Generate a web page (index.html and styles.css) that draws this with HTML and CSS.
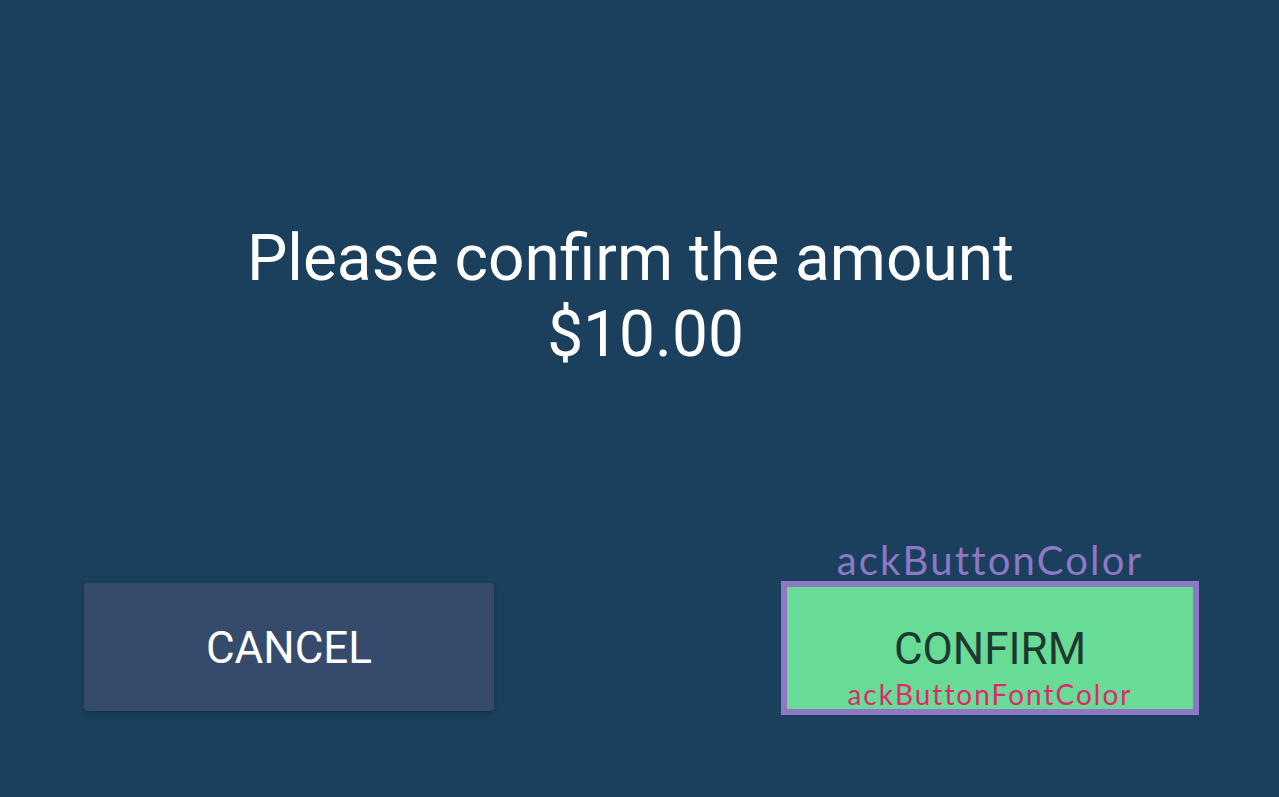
FILE: index.html
```html
<!DOCTYPE html>
<html>
<head>
<meta charset="utf-8">
<link rel="stylesheet" href="styles.css">
</head>
<body>
<main class="screen">
  <section class="prompt">
    <p class="line line-first">Please confirm the amount</p>
    <p class="line line-second">$10.00</p>
  </section>
  <section class="actions">
    <button class="btn btn-cancel"><span class="btn-label">CANCEL</span></button>
    <div class="confirm-wrap">
      <span class="note note-color">ackButtonColor</span>
      <button class="btn btn-confirm">
        <span class="btn-label">CONFIRM</span>
        <span class="note note-font">ackButtonFontColor</span>
      </button>
    </div>
  </section>
</main>
</body>
</html>
```

FILE: styles.css
```css
html, body {
  margin: 0;
  padding: 0;
  height: 100%;
}
body {
  background: #1b405d;
  font-family: Roboto, "Liberation Sans", sans-serif;
  overflow: hidden;
}
.screen {
  height: 797px;
  display: flex;
  flex-direction: column;
}
.prompt {
  padding-top: 221px;
  text-align: center;
  color: #ffffff;
  font-size: 64px;
  line-height: 76px;
}
.line {
  margin: 0;
}
.line-first {
  padding-right: 18px;
}
.line-second {
  padding-left: 12px;
}
.actions {
  margin-top: auto;
  display: flex;
  justify-content: space-between;
  align-items: flex-end;
  padding: 0 80px 82px 84px;
}
.btn {
  border: none;
  font-family: Roboto, "Liberation Sans", sans-serif;
  font-size: 44px;
  padding: 0;
  display: flex;
  align-items: center;
  justify-content: center;
}
.btn-label {
  padding-top: 2px;
}
.btn-cancel {
  width: 410px;
  height: 128px;
  margin-bottom: 4px;
  background: #364a6b;
  color: #ffffff;
  border-radius: 4px;
  box-shadow: 0 2px 4px rgba(0, 0, 0, 0.25);
}
.confirm-wrap {
  position: relative;
}
.btn-confirm {
  position: relative;
  width: 418px;
  height: 134px;
  box-sizing: border-box;
  background: #68db96;
  border: 6px solid #8e77c4;
  color: #1e3832;
}
.note {
  position: absolute;
  left: 0;
  right: 0;
  text-align: center;
  font-family: Lato, "Open Sans", sans-serif;
  white-space: nowrap;
}
.note-color {
  bottom: 131px;
  color: #8e77c4;
  font-size: 40px;
  letter-spacing: 2.2px;
}
.note-font {
  bottom: -2px;
  color: #e0286e;
  font-size: 28px;
  letter-spacing: 2px;
}
```
